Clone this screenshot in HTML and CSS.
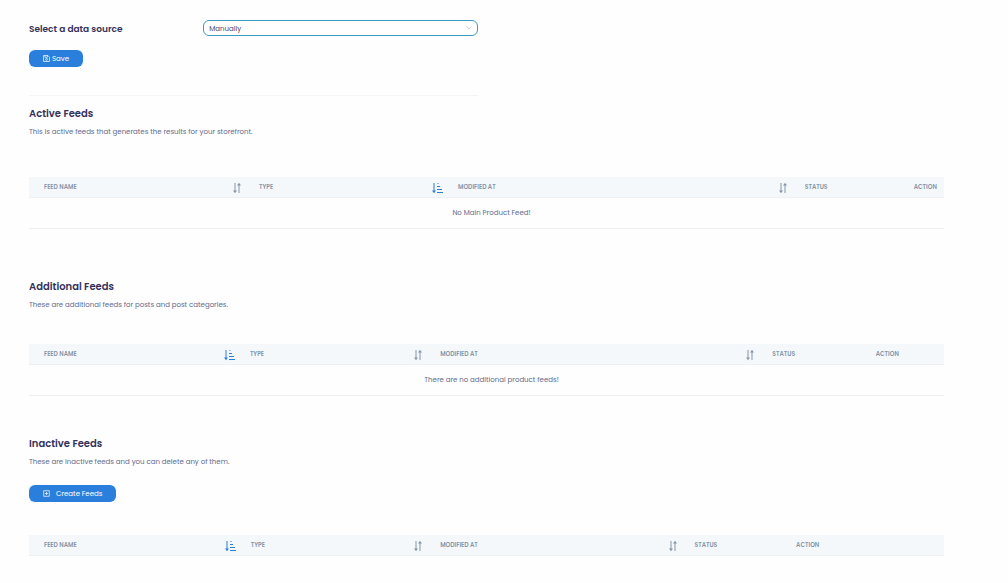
FILE: index.html
```html
<!DOCTYPE html>
<html lang="en">
<head>
<meta charset="utf-8">
<meta name="viewport" content="width=device-width, initial-scale=1">
<title>Product Feeds</title>
<link rel="stylesheet" href="styles.css">
</head>
<body>
<svg class="defs" aria-hidden="true">
  <symbol id="sort" viewBox="0 0 8 12">
    <path d="M2 1V9M6 3V11" stroke="currentColor" fill="none"/>
    <path d="M0 8.5h4L2 11.2zM4 3.5h4L6 .8z" fill="currentColor"/>
  </symbol>
  <symbol id="sorted" viewBox="0 0 11 12">
    <path d="M2 1V9M5 4.5h3M5 7.5h5M5 10.5h6" stroke="currentColor" fill="none"/>
    <path d="M5 1.5h2" stroke="currentColor" opacity=".5"/>
    <path d="M0 8.5h4L2 11.2z" fill="currentColor"/>
  </symbol>
</svg>
<main class="page">
  <form class="source">
    <div class="field">
      <label class="field-label" for="source">Select a data source</label>
      <div class="select-wrap">
        <select class="select" id="source"><option>Manually</option></select>
        <svg class="chevron" viewBox="0 0 6 4" aria-hidden="true"><path d="M.5 .5L3 3 5.5 .5" fill="none" stroke="currentColor" stroke-width=".7"/></svg>
      </div>
    </div>
    <button class="button button-save" type="button">
      <svg class="button-icon" viewBox="0 0 8 8" fill="none" stroke="currentColor" stroke-width=".8" aria-hidden="true"><path d="M.6 .6H5.6L7.4 2.4V7.4H.6zM2.2 .6V2.6H5V.6"/><circle cx="4" cy="5" r="1.1"/></svg>
      Save
    </button>
  </form>

  <section class="feeds">
    <h2 class="title">Active Feeds</h2>
    <p class="text">This is active feeds that generates the results for your storefront.</p>
    <table class="table table-active">
      <colgroup><col class="name"><col class="type"><col class="modified"><col class="status"><col></colgroup>
      <thead><tr>
        <th><div class="head">Feed Name <svg class="sort"><use href="#sort"/></svg></div></th>
        <th><div class="head">Type <svg class="sorted"><use href="#sorted"/></svg></div></th>
        <th><div class="head">Modified At <svg class="sort"><use href="#sort"/></svg></div></th>
        <th>Status</th>
        <th>Action</th>
      </tr></thead>
      <tbody><tr><td colspan="5">No Main Product Feed!</td></tr></tbody>
    </table>
  </section>

  <section class="feeds">
    <h2 class="title">Additional Feeds</h2>
    <p class="text">These are additional feeds for posts and post categories.</p>
    <table class="table table-additional">
      <colgroup><col class="name"><col class="type"><col class="modified"><col class="status"><col></colgroup>
      <thead><tr>
        <th><div class="head">Feed Name <svg class="sorted"><use href="#sorted"/></svg></div></th>
        <th><div class="head">Type <svg class="sort"><use href="#sort"/></svg></div></th>
        <th><div class="head">Modified At <svg class="sort"><use href="#sort"/></svg></div></th>
        <th>Status</th>
        <th>Action</th>
      </tr></thead>
      <tbody><tr><td colspan="5">There are no additional product feeds!</td></tr></tbody>
    </table>
  </section>

  <section class="feeds">
    <h2 class="title">Inactive Feeds</h2>
    <p class="text">These are inactive feeds and you can delete any of them.</p>
    <button class="button button-create" type="button">
      <svg class="button-icon" viewBox="0 0 8 8" fill="none" stroke="currentColor" stroke-width=".8" aria-hidden="true"><path d="M.8 .8H7.2V7.2H.8zM4 2.2V5.8M2.2 4H5.8"/></svg>
      Create Feeds
    </button>
    <table class="table table-inactive">
      <colgroup><col class="name"><col class="type"><col class="modified"><col class="status"><col></colgroup>
      <thead><tr>
        <th><div class="head">Feed Name <svg class="sorted"><use href="#sorted"/></svg></div></th>
        <th><div class="head">Type <svg class="sort"><use href="#sort"/></svg></div></th>
        <th><div class="head">Modified At <svg class="sort"><use href="#sort"/></svg></div></th>
        <th>Status</th>
        <th>Action</th>
      </tr></thead>
    </table>
  </section>
</main>
</body>
</html>
```

FILE: styles.css
```css
* { box-sizing: border-box; }
body {
  margin: 0;
  background: #fefefe;
  color: #5e6b8c;
  font: 7px/12px Poppins, Inter, "Liberation Sans", sans-serif;
}
.defs { display: none; }
.page { padding: 20px 64px 20px 29px; }

.source {
  width: 49.1%;
  height: 76px;
  border-bottom: 1px solid #f4f4f6;
}
.field { display: flex; align-items: center; }
.field-label {
  flex: 1;
  padding-top: 1px;
  color: #34315b;
  font-size: 9px;
  font-weight: 600;
}
.select-wrap { position: relative; width: 275px; }
.select {
  display: block;
  width: 100%;
  height: 16px;
  padding: 1px 5px 0;
  border: 1px solid #3b9cbd;
  border-radius: 6px;
  background: #fff;
  color: #4a4770;
  font: inherit;
  appearance: none;
}
.chevron {
  position: absolute;
  top: 6px;
  right: 6px;
  width: 6px;
  height: 4px;
  color: #b8bcc8;
  pointer-events: none;
}
.button {
  display: flex;
  align-items: center;
  height: 17px;
  padding: 0 14px;
  border: 0;
  border-radius: 6px;
  background: #2a7fdc;
  color: #fff;
  font: inherit;
  white-space: nowrap;
}
.button-icon { width: 7px; height: 7px; flex: none; }
.button-save { gap: 2px; margin-top: 14px; }
.button-create { gap: 6px; margin-top: 17px; }

.feeds { padding-top: 10px; }
.feeds + .feeds { padding-top: 50px; }
.feeds + .feeds + .feeds { padding-top: 40px; }
.title {
  margin: 0;
  color: #34315b;
  font-size: 10px;
  line-height: 16px;
  font-weight: 600;
}
.text { margin: 4px 0 0; line-height: 12px; }

.table {
  width: 100%;
  margin-top: 33px;
  border-collapse: separate;
  border-spacing: 0;
  table-layout: fixed;
}
.table-active { margin-top: 39px; }
th {
  height: 21px;
  padding: 4px 0 0 15px;
  border-bottom: 1px solid #edf1f4;
  background: #f4f8fb;
  color: #8496a9;
  font-size: 6px;
  line-height: 12px;
  font-weight: 600;
  text-align: left;
  text-transform: uppercase;
  vertical-align: top;
}
td {
  height: 31px;
  padding: 0 5px 0 15px;
  border-bottom: 1px solid #eff0f2;
  text-align: center;
}
.head { display: flex; justify-content: space-between; }
.sort { width: 8px; height: 12px; margin: 1px 3px 0 0; }
.sorted { width: 11px; height: 12px; margin-top: 1px; color: #2a7fdc; }

.table-active .name { width: 23.5%; }
.table-active .type { width: 21.75%; }
.table-active .modified { width: 37.9%; }
.table-active .status { width: 11.9%; }
.table-additional .name { width: 22.5%; }
.table-additional .type { width: 20.8%; }
.table-additional .modified { width: 36.3%; }
.table-additional .status { width: 11.3%; }
.table-inactive .name { width: 22.6%; }
.table-inactive .type { width: 20.7%; }
.table-inactive .modified { width: 27.8%; }
.table-inactive .status { width: 11.1%; }
```
